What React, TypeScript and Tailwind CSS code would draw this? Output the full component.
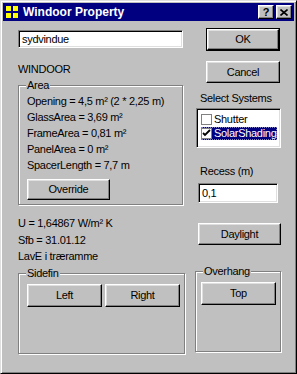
const raised =
  "border border-t-white border-l-white border-r-black border-b-black shadow-[inset_-1px_-1px_0_#808080,inset_1px_1px_0_#dfdfdf]";
const sunken =
  "border border-t-[#808080] border-l-[#808080] border-r-white border-b-white shadow-[inset_1px_1px_0_#000,inset_-1px_-1px_0_#dfdfdf] bg-white";
const etched =
  "relative border border-[#808080] shadow-[inset_1px_1px_0_#fff,1px_1px_0_#fff]";

const Button = ({ label, className }: { label: string; className: string }) => (
  <div className={`${raised} ${className} flex items-center justify-center bg-[#c0c0c0] text-black`}>
    {label}
  </div>
);

const Group = ({
  title,
  className,
  children,
}: {
  title: string;
  className: string;
  children?: React.ReactNode;
}) => (
  <div className={`${etched} ${className}`}>
    <span className="absolute -top-[8px] left-[7px] bg-[#c0c0c0] px-[1px] leading-[14px]">
      {title}
    </span>
    {children}
  </div>
);

const CheckBox = ({ checked }: { checked?: boolean }) => (
  <div className="w-[11px] h-[11px] bg-white border border-[#808080] flex items-center justify-center shrink-0">
    {checked && (
      <svg width="9" height="9" viewBox="0 0 9 9">
        <path d="M1 4 L3 6 L8 1" stroke="black" strokeWidth="1.8" fill="none" />
      </svg>
    )}
  </div>
);

const App = () => {
  return (
    <div
      className="w-[297px] h-[374px] bg-[#c0c0c0] text-[11px] tracking-[-0.3px] text-black border border-t-[#dfdfdf] border-l-[#dfdfdf] border-r-black border-b-black shadow-[inset_1px_1px_0_#fff,inset_-1px_-1px_0_#808080] p-[2px] flex flex-col"
      style={{ fontFamily: '"Liberation Sans", Arial, sans-serif' }}
    >
      {/* title bar */}
      <div className="h-[18px] bg-[#000080] flex items-center pl-[2px] pr-[2px]">
        <svg width="14" height="14" viewBox="0 0 14 14" className="shrink-0">
          <rect x="1" y="1" width="5" height="5" fill="#ffff00" />
          <rect x="8" y="1" width="5" height="5" fill="#ffff00" />
          <rect x="1" y="8" width="5" height="5" fill="#ffff00" />
          <rect x="8" y="8" width="5" height="5" fill="#ffff00" />
        </svg>
        <span className="ml-[4px] text-white font-bold text-[12px] tracking-normal">Windoor Property</span>
        <div className="ml-auto flex gap-[2px]">
          <div className={`${raised} w-[16px] h-[14px] bg-[#c0c0c0] flex items-center justify-center font-bold text-[11px] leading-none`}>
            ?
          </div>
          <div className={`${raised} w-[16px] h-[14px] bg-[#c0c0c0] flex items-center justify-center`}>
            <svg width="8" height="7" viewBox="0 0 8 7">
              <path d="M0.5 0.5 L7.5 6.5 M7.5 0.5 L0.5 6.5" stroke="black" strokeWidth="1.6" />
            </svg>
          </div>
        </div>
      </div>

      <div className="flex pl-[15px]">
        {/* left column */}
        <div className="w-[167px] flex flex-col">
          <div className={`${sunken} mt-[9px] w-[165px] h-[18px] px-[3px] leading-[16px]`}>sydvindue</div>
          <div className="mt-[14px] leading-[14px]">WINDOOR</div>
          <Group title="Area" className="mt-[9px] w-[165px] h-[120px] pl-[8px] pt-[7px]">
            <div className="leading-[16px]">
              <div>Opening = 4,5 m² (2 * 2,25 m)</div>
              <div>GlassArea = 3,69 m²</div>
              <div>FrameArea = 0,81 m²</div>
              <div>PanelArea = 0 m²</div>
              <div>SpacerLength = 7,7 m</div>
            </div>
            <Button label="Override" className="mt-[6px] w-[83px] h-[21px]" />
          </Group>
          <div className="mt-[10px] leading-[16.5px]">
            <div>U = 1,64867 W/m² K</div>
            <div>Sfb = 31.01.12</div>
            <div>LavE i træramme</div>
          </div>
          <Group title="Sidefin" className="mt-[8px] w-[167px] h-[81px] pl-[8px] pt-[10px]">
            <div className="flex gap-[3px]">
              <Button label="Left" className="w-[75px] h-[23px]" />
              <Button label="Right" className="w-[75px] h-[23px]" />
            </div>
          </Group>
        </div>

        {/* right column */}
        <div className="ml-[10px] w-[86px] flex flex-col">
          <div className="mt-[7px] ml-[11px] w-[74px] h-[23px] border border-black">
            <Button label="OK" className="w-full h-full" />
          </div>
          <Button label="Cancel" className="mt-[10px] ml-[11px] w-[74px] h-[22px]" />
          <div className="mt-[8px] ml-[5px] leading-[14px]">Select Systems</div>
          <div className={`${sunken} mt-[3px] ml-[1px] w-[85px] h-[40px] pt-[4px] pl-[4px] pr-[3px]`}>
            <div className="flex items-center h-[12px] gap-[2px]">
              <CheckBox />
              <span>Shutter</span>
            </div>
            <div className="flex items-center h-[13px] mt-[2px] gap-[2px] bg-[#000080] text-white outline outline-1 outline-dotted outline-[#8080c0] -outline-offset-1">
              <CheckBox checked />
              <span>SolarShading</span>
            </div>
          </div>
          <div className="mt-[16px] ml-[5px] leading-[14px]">Recess (m)</div>
          <div className={`${sunken} mt-[5px] ml-[3px] w-[80px] h-[20px] px-[3px] leading-[18px]`}>0,1</div>
          <Button label="Daylight" className="mt-[20px] ml-[3px] w-[83px] h-[22px]" />
          <Group title="Overhang" className="mt-[26px] w-[86px] h-[81px] pl-[5px] pt-[10px]">
            <Button label="Top" className="w-[75px] h-[23px]" />
          </Group>
        </div>
      </div>
    </div>
  );
};

export default App;
